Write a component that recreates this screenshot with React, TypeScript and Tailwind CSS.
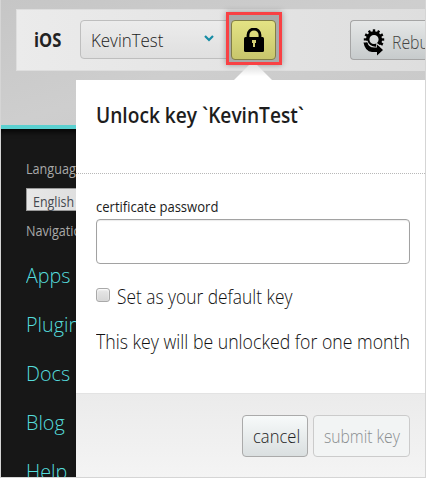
import type { ReactNode } from "react";

const gearTeeth = Array.from({ length: 12 }, (_, i) => i * 30);

function Txt({ className = "", children }: { className?: string; children: ReactNode }) {
  return (
    <span className={`inline-block origin-left whitespace-nowrap font-['Open_Sans','Noto_Sans',sans-serif] ${className}`}>
      {children}
    </span>
  );
}

function LockIcon() {
  return (
    <svg width="20" height="24" viewBox="0 0 20 24" className="shrink-0" aria-hidden="true">
      <path d="M4 11V7a6 6 0 0 1 12 0v4" fill="none" stroke="#000" strokeWidth="2.8" />
      <path d="M0 10.500Q0 9 1.500 9h17Q20 9 20 10.500v12Q20 24 18.500 24h-17Q0 24 0 22.500Z" fill="#000" />
      <path d="M8 12h4v3h-1v4H9v-4H8Z" fill="#d3cf75" />
    </svg>
  );
}

function RebuildIcon() {
  return (
    <svg width="22" height="27" viewBox="0 0 22 27" className="shrink-0" aria-hidden="true">
      <circle cx="11" cy="10.500" r="6.400" fill="none" stroke="#000" strokeWidth="3.600" />
      {gearTeeth.map((a) => (
        <rect key={a} x="9.800" y="0.300" width="2.400" height="3" fill="#000" transform={`rotate(${a} 11 10.500)`} />
      ))}
      <path d="M-1 12.500H4Q5 17.500 12 18.500H14V15L22 21" fill="none" stroke="#d9dada" strokeWidth="1.500" />
      <path d="M0.500 13.500H4.500Q5.500 18.500 11 18.500H14V15.500L20 21L14 26.500V23H9Q2 22.500 0.500 13.500Z" fill="#000" />
    </svg>
  );
}

function Toolbar() {
  return (
    <header className="h-[129px] border-b-4 border-[#5bd0d0] bg-gradient-to-br from-[#c6c6c6] via-[#cecece] to-[#c8c8c8] pt-[9px] pl-[15px]">
      <div className="flex h-[62px] items-start border-y border-l border-[#dedede] bg-gradient-to-r from-[#ebebeb] to-[#dedede] pt-[10px]">
        <div className="w-[63px] pl-[17px]">
          <Txt className="scale-x-[0.87] text-[19px] leading-[41px] font-bold text-[#222]">iOS</Txt>
        </div>
        <div className="flex h-[39px] w-[152px] shrink-0 items-center justify-between rounded-l-[4px] border border-[#bebebe] bg-gradient-to-b from-[#ececec] to-[#dfdfdf] pr-[17px] pl-[10px]">
          <Txt className="scale-x-[0.89] text-[19px] leading-[38px] font-light text-[#222]">KevinTest</Txt>
          <svg width="10" height="7" viewBox="0 0 10 7" className="-mt-[3px] shrink-0" aria-hidden="true">
            <path d="M1 1L5 5L9 1" fill="none" stroke="#168ca5" strokeWidth="2.200" />
          </svg>
        </div>
        <div className="-mt-[8px] -ml-[6px] flex h-[53px] w-[56px] shrink-0 items-start justify-center border-[3px] border-[#f94144] bg-[#aaa] pt-[5px] shadow-[0_0_6px_rgba(0,0,0,0.35)]">
          <button className="-ml-px flex h-[40px] w-[45px] shrink-0 items-center justify-center rounded-[4px] border border-[#817d46] bg-gradient-to-b from-[#e4e384] to-[#c8c66c]">
            <LockIcon />
          </button>
        </div>
        <button className="ml-[68px] flex h-[40px] w-[75px] shrink-0 items-start overflow-hidden rounded-l-[4px] border border-r-0 border-[#a5a5a5] bg-gradient-to-b from-[#e5e7e7] to-[#c7cbcc] pt-[8px] pl-[12px]">
          <RebuildIcon />
          <Txt className="-mt-[8px] ml-[7px] scale-x-[0.88] text-[18px] leading-[43px] font-light text-[#444]">Rebuild</Txt>
        </button>
      </div>
    </header>
  );
}

function Sidebar() {
  return (
    <aside className="h-[348px] w-[75px] overflow-hidden bg-[#171717] pt-[27px] pl-[25px] shadow-[inset_0_6px_6px_-4px_#000]">
      <div className="h-[32px]">
        <Txt className="scale-x-[0.87] text-[14.500px] leading-[26px] text-[#a9a9a9]">Language</Txt>
      </div>
      <div className="h-[23px] w-[120px] border border-[#999] bg-gradient-to-r from-[#e7e7e7] to-[#d5d5d5] pl-[6px]">
        <Txt className="scale-x-[0.83] text-[15px] leading-[19px] text-[#44484f]">English</Txt>
      </div>
      <div className="mt-[7px] h-[32px]">
        <Txt className="scale-x-[0.87] text-[14.500px] leading-[26px] text-[#a9a9a9]">Navigation</Txt>
      </div>
      <nav className="mt-px flex flex-col">
        {["Apps", "Plugins", "Docs", "Blog", "Help"].map((item) => (
          <a key={item} className="block h-[49px]">
            <Txt className="scale-x-[0.94] text-[21px] leading-[49px] font-light text-[#55dcdc]">{item}</Txt>
          </a>
        ))}
      </nav>
    </aside>
  );
}

function UnlockPopover() {
  return (
    <section className="absolute top-[80px] left-[76px] flex h-[397px] w-[349px] flex-col bg-white">
      <svg className="absolute -top-[19px] left-[158px]" width="38" height="20" viewBox="0 0 38 20" aria-hidden="true">
        <defs>
          <linearGradient id="tip" x1="0" y1="0" x2="0" y2="1">
            <stop offset="0" stopColor="#dedede" />
            <stop offset="0.700" stopColor="#fff" />
          </linearGradient>
        </defs>
        <path d="M0 20V19L15 4H23L38 19V20Z" fill="url(#tip)" />
      </svg>
      <div className="h-[94px] border-b border-dotted border-[#b8b8b8] pt-[15px] pl-[20px]">
        <Txt className="scale-x-[0.87] text-[22px] leading-[39px] font-semibold text-[#1d1d1d]">Unlock key `KevinTest`</Txt>
      </div>
      <div className="h-[219px] px-[20px] pt-[20px]">
        <label className="block h-[25px]">
          <Txt className="scale-x-[0.9] text-[14.500px] leading-[26px] text-[#1b1b1b]">certificate password</Txt>
        </label>
        <input className="block h-[45px] w-[314px] rounded-[4px] border border-[#a2a2a2] bg-white shadow-[inset_0_1px_1px_#ececec] outline-none" />
        <label className="mt-[13px] flex h-[40px] items-center">
          <span className="-mt-[4px] h-[14px] w-[14px] shrink-0 rounded-[3px] border border-[#a9a9a9] bg-gradient-to-b from-[#e8e8e8] to-[#d6d6d6] shadow-[inset_0_1px_2px_#fff]" />
          <Txt className="ml-[7px] scale-x-[0.89] text-[19.500px] leading-[40px] font-light text-[#111]">Set as your default key</Txt>
        </label>
        <p className="mt-[5px] h-[40px]">
          <Txt className="scale-x-[0.907] text-[19.500px] leading-[40px] font-light text-[#111]">This key will be unlocked for one month</Txt>
        </p>
      </div>
      <footer className="flex h-[84px] justify-end gap-[5px] border-t border-[#e3e3e3] bg-gradient-to-b from-[#ebebeb] to-[#f4f4f4] pt-[21px] pr-[15px]">
        <button className="h-[42px] w-[66px] rounded-[4px] border border-[#aaa] bg-gradient-to-b from-[#f7fafa] to-[#dadfe0] pl-[10px] text-left">
          <Txt className="scale-x-[0.92] text-[18px] leading-[40px] font-light text-[#222]">cancel</Txt>
        </button>
        <button className="h-[42px] w-[97px] rounded-[4px] border border-[#cbcbcb] bg-[#f2f4f4] pl-[10px] text-left">
          <Txt className="scale-x-[0.87] text-[18px] leading-[40px] font-light text-[#8a8e90]">submit key</Txt>
        </button>
      </footer>
    </section>
  );
}

export default function App() {
  return (
    <main className="relative h-[478px] w-[426px] overflow-hidden border-x border-b border-[#d5d5d5] bg-white">
      <Toolbar />
      <Sidebar />
      <div className="absolute inset-y-0 -left-px w-[426px]">
        <UnlockPopover />
      </div>
    </main>
  );
}
